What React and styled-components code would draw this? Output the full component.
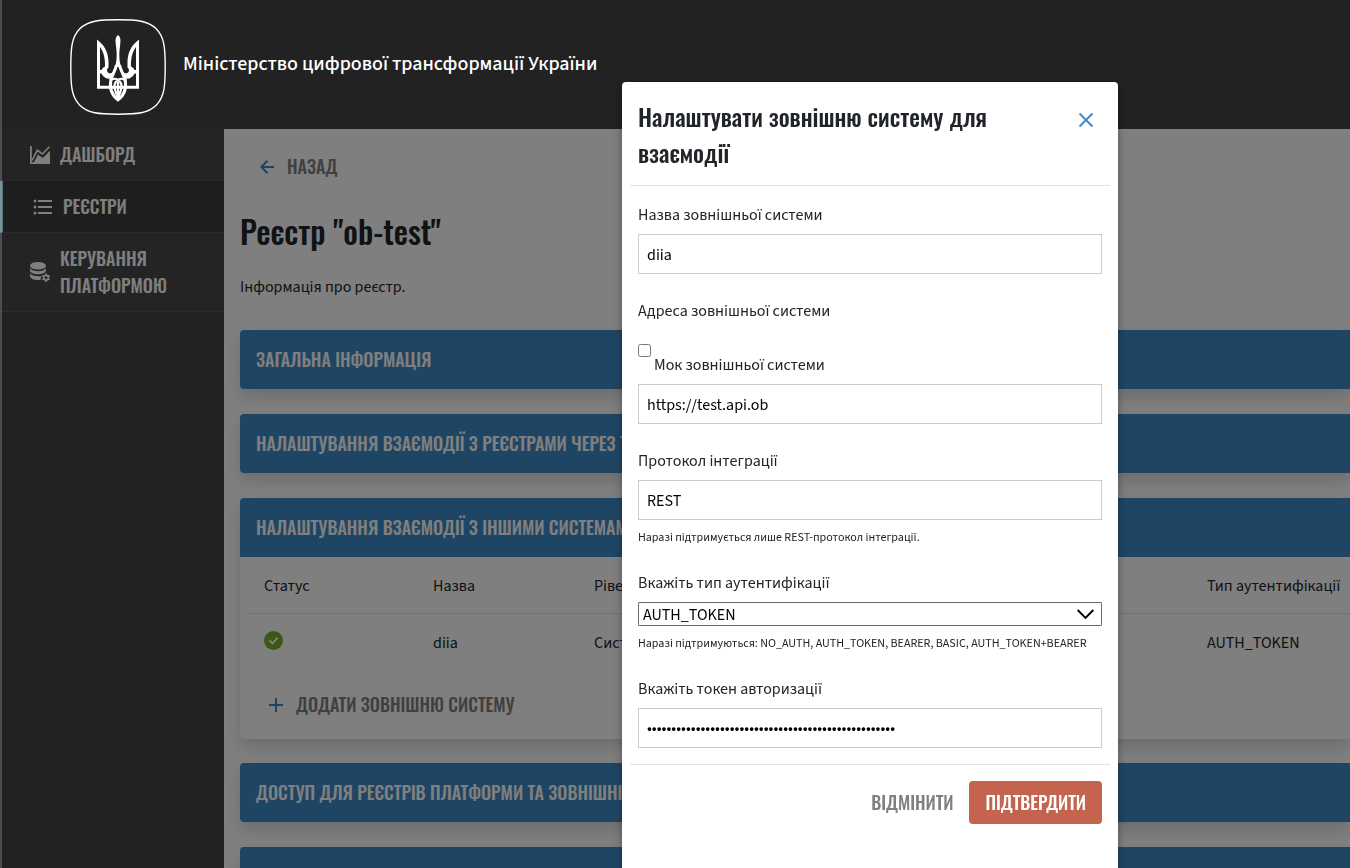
import React, {useState} from "react";
import styled, {createGlobalStyle} from "styled-components";

const heading = `"Oswald", "Open Sans Condensed", "Roboto Condensed", sans-serif`;
const text = `"Source Sans 3", "Noto Sans", sans-serif`;

const GlobalStyle = createGlobalStyle`
  * {
    box-sizing: border-box;
  }

  body {
    margin: 0;
    overflow: hidden;
    background: #444;
    color: #212529;
    font-family: ${text};
    font-size: 16px;
    line-height: 24px;
  }
`;

const Page = styled.div`
  display: flex;
  flex-direction: column;
  height: 100vh;

  &::after {
    content: "";
    position: fixed;
    top: 0;
    bottom: 0;
    left: 0;
    width: 2px;
    z-index: 3;
    background: rgba(255, 255, 255, 0.19);
  }
`;

const Header = styled.header`
  display: flex;
  align-items: center;
  gap: 17px;
  position: relative;
  z-index: 2;
  flex: none;
  padding: 19px 70px 14px;
  background: #222;
  color: #fff;
`;

const Ministry = styled.div`
  padding-bottom: 6px;
  font-size: 20px;
  font-weight: 500;
`;

const Content = styled.div`
  display: flex;
  flex: 1;
  min-height: 0;
`;

const Sidebar = styled.nav`
  flex: none;
  width: 224px;
`;

const NavItem = styled.a`
  display: flex;
  align-items: center;
  gap: 10px;
  padding: 12px 30px;
  border-left: ${({$active}) => ($active ? "3px solid #b0f0ff" : "none")};
  border-bottom: 1px solid #565656;
  background: ${({$active}) => ($active ? "#3c3c3c" : "#484848")};
  color: #fff;
  font-family: ${heading};
  font-size: 18px;
  font-weight: 500;
  line-height: 27px;
  text-decoration: none;
  text-transform: uppercase;

  svg {
    flex: none;
  }
`;

const Main = styled.main`
  flex: 1;
  min-width: 0;
  padding: 16px 0 0 16px;
  overflow: hidden;
  background: #fff;
`;

const BackLink = styled.a`
  display: inline-flex;
  align-items: center;
  gap: 13px;
  margin-bottom: 19px;
  padding: 8px 20px;
  color: #808080;
  font-family: ${heading};
  font-size: 18px;
  font-weight: 500;
  line-height: 27px;
  text-decoration: none;
  text-transform: uppercase;
`;

const Title = styled.h1`
  margin: 0 0 20px;
  font-family: ${heading};
  font-size: 32px;
  font-weight: 500;
  line-height: 48px;
`;

const Info = styled.p`
  margin: 0 0 31px;
`;

const Card = styled.section`
  margin-bottom: ${({$open}) => ($open ? 24 : 25)}px;
  border-radius: 4px 0 0 4px;
  box-shadow: 0 8px 16px rgba(0, 0, 0, 0.15);
`;

const CardTitle = styled.h2`
  margin: 0;
  padding: 16px;
  border-radius: ${({$open}) => ($open ? "4px 0 0 0" : "4px 0 0 4px")};
  background: #3e8ac8;
  color: #fff;
  font-family: ${heading};
  font-size: 18px;
  font-weight: 500;
  line-height: 27px;
  text-transform: uppercase;
  white-space: nowrap;
`;

const CardBody = styled.div`
  padding: 0 0 13px 8px;
`;

const Table = styled.table`
  width: 100%;
  border-collapse: collapse;
  table-layout: fixed;

  th,
  td {
    padding: 2px 16px 0;
    font-weight: 400;
    text-align: left;
    white-space: nowrap;
  }

  th {
    height: 56px;
    border-bottom: 1px solid #e0e0e6;
  }

  td {
    height: 57px;
  }

  svg {
    display: block;
    margin-bottom: 4px;
  }
`;

const Column = styled.col`
  width: ${({$width}) => $width}px;
`;

const AddButton = styled.button`
  display: flex;
  align-items: center;
  gap: 13px;
  margin: 13px 0 0 5px;
  padding: 8px 16px;
  border: none;
  background: none;
  color: #808080;
  font-family: ${heading};
  font-size: 18px;
  font-weight: 500;
  line-height: 27px;
  text-transform: uppercase;
`;

const Backdrop = styled.div`
  position: fixed;
  inset: 0;
  z-index: 1;
  background: rgba(0, 0, 0, 0.5);
`;

const ModalLayer = styled.div`
  display: flex;
  justify-content: flex-end;
  position: fixed;
  inset: 0;
  z-index: 4;
  padding: 82px 232px 0 0;
`;

const Modal = styled.form`
  width: 496px;
  height: 850px;
  padding: 0 8px;
  border-radius: 4px;
  background: #fff;
  box-shadow: 0 2px 8px rgba(0, 0, 0, 0.33);
`;

const ModalHeader = styled.div`
  display: flex;
  justify-content: space-between;
  align-items: flex-start;
  padding: 16px 8px 15px;
  border-bottom: 1px solid #e1e1ea;
`;

const ModalTitle = styled.h2`
  max-width: 380px;
  margin: 0;
  font-family: ${heading};
  font-size: 24px;
  font-weight: 500;
  line-height: 36px;
`;

const CloseButton = styled.button`
  display: flex;
  margin: 6px 0;
  padding: 8px;
  border: none;
  background: none;
`;

const ModalBody = styled.div`
  display: flex;
  flex-direction: column;
  gap: 24px;
  padding: 16px 8px;
`;

const Field = styled.div`
  display: flex;
  flex-direction: column;
  gap: 6px;
`;

const Label = styled.label`
  line-height: 26px;
`;

const Input = styled.input`
  width: 100%;
  height: 40px;
  padding: 2px 8px 0;
  border: 1px solid #cbcbd6;
  border-radius: 0;
  background: #fff;
  color: #000;
  font-family: ${text};
  font-size: 16px;

  &[type="password"] {
    padding-top: 0;
  }
`;

const Hint = styled.span`
  padding-top: 3px;
  font-size: 12px;
  line-height: 17px;
`;

const CheckRow = styled.div`
  display: flex;
  align-items: flex-start;
  gap: 3px;
  padding-top: 14px;

  input {
    width: 13px;
    height: 13px;
    margin: 0;
  }

  label {
    padding-top: 8px;
  }
`;

const SelectBox = styled.div`
  position: relative;

  svg {
    position: absolute;
    top: 7px;
    right: 8px;
    pointer-events: none;
  }
`;

const Select = styled.select`
  display: block;
  width: 100%;
  height: 24px;
  padding: 1px 4px 0;
  appearance: none;
  border: 1px solid #6b6b6b;
  border-radius: 1px;
  background: #fff;
  color: #000;
  font-family: ${text};
  font-size: 16px;
`;

const ModalFooter = styled.div`
  display: flex;
  justify-content: flex-end;
  padding: 16px 8px;
  border-top: 1px solid #e1e1ea;
`;

const Button = styled.button`
  padding: 8px 16px;
  border: none;
  border-radius: 4px;
  background: ${({$primary}) => ($primary ? "#c5644e" : "none")};
  color: ${({$primary}) => ($primary ? "#fff" : "#808080")};
  font-family: ${heading};
  font-size: 18px;
  font-weight: 500;
  line-height: 27px;
  text-transform: uppercase;
`;

const Logo = () => (
    <svg width="96" height="96" viewBox="0 0 96 96" fill="none" stroke="#fff" aria-hidden="true">
        <path
            strokeWidth="1.4"
            d="M48 .8C67 .8 78 1.6 86.200 9.800S95.200 29 95.200 48 94.400 78 86.200 86.200 67 95.200 48 95.200 18 94.400 9.800 86.200.8 67 .8 48 1.600 18 9.800 9.800 29 .8 48 .8Z"
        />
        {/* trident: middle blade, side blades, base, shield */}
        <path fill="#fff" stroke="none" d="M48 16C45.600 18 45.200 20.500 45.700 24L46.600 33C46.900 39 46.400 44 44.800 48H51.200C49.600 44 49.100 39 49.400 33L50.300 24C50.800 20.500 50.400 18 48 16Z"/>
        <path fill="#fff" stroke="none" d="M27 20.500C34.500 26 38 33 38.500 42V48.500C37 49.500 36.600 51.500 37.500 53 38.800 55 42 54.800 43.500 52L43 57.500C41.500 60 37.500 60.500 35 58.500 33 57 32 56 31.500 54.500H30V67H27ZM30 28V51H31.500C32 49.500 33.300 48.300 35 47.500 35.200 40 34 33.500 30 28Z"/>
        <path fill="#fff" stroke="none" d="M69 20.500C61.500 26 58 33 57.500 42V48.500C59 49.500 59.400 51.500 58.500 53 57.200 55 54 54.800 52.500 52L53 57.500C54.500 60 58.500 60.500 61 58.500 63 57 64 56 64.500 54.500H66V67H69ZM66 28V51H64.500C64 49.500 62.700 48.300 61 47.500 60.800 40 62 33.500 66 28Z"/>
        <path strokeWidth="3" d="M28.500 54V68.200H67.500V54"/>
        <path strokeWidth="3" d="M46.500 46C45.500 51 42 56 40.800 61.500M49.500 46C50.500 51 54 56 55.200 61.500"/>
        <path strokeWidth="3" d="M41 60C39.400 68 41.500 76 48 80.800 54.500 76 56.600 68 55 60"/>
        <path strokeWidth="2.200" d="M42 60.500C45.500 58.500 50.500 61 51.500 66 52 70 50 74 48 79M54 60.500C50.500 58.500 45.500 61 44.500 66 44 70 46 74 48 79M48 63V80"/>
    </svg>
);

const ChartIcon = () => (
    <svg width="20" height="18" viewBox="0 0 20 18" aria-hidden="true">
        <path fill="none" stroke="#fff" strokeWidth="1.800" d="M.9 0V17.100H19"/>
        <path fill="none" stroke="#fff" strokeWidth="1.600" d="M2 14.500 7.300 4.300 12.500 8 19.300.8"/>
        <path fill="#fff" d="M3.500 17 8 8.500 12.800 12 20 4.800V18H3.500Z"/>
    </svg>
);

const ListIcon = () => (
    <svg width="20" height="18" viewBox="0 0 20 18" fill="#fff" aria-hidden="true">
        <circle cx="2" cy="3" r="1.500"/>
        <circle cx="2" cy="9" r="1.500"/>
        <circle cx="2" cy="15" r="1.500"/>
        <path d="M5 2H19V4H5ZM5 8H19V10H5ZM5 14H19V16H5Z"/>
    </svg>
);

const DatabaseIcon = () => (
    <svg width="20" height="20" viewBox="0 0 20 20" aria-hidden="true">
        <ellipse cx="8" cy="3.800" rx="8" ry="3.800" fill="#fff"/>
        <path fill="#fff" d="M0 6C1.500 8.300 4.500 9.300 8 9.300S14.500 8.300 16 6V8.500C15.500 11 12 12.300 8 12.300S.5 11 0 8.500Z"/>
        <path fill="#fff" d="M0 11.300C1.500 13.500 4.500 14.300 8 14.300 9.300 14.300 10.500 14.200 11.500 14L10.500 17.800C9.700 18 8.800 18 8 18 3.500 18 .3 16.500 0 14Z"/>
        <circle cx="16" cy="15.700" r="2.300" fill="none" stroke="#fff" strokeWidth="1.700"/>
        <path stroke="#fff" strokeWidth="1.700" d="M16 11.500V13.500M16 18V20M12.300 13.600 14 14.600M18 16.800 19.700 17.800M12.300 17.800 14 16.800M18 14.600 19.700 13.600"/>
    </svg>
);

const ArrowIcon = () => (
    <svg width="14" height="14" viewBox="0 0 14 14" fill="none" stroke="#3e8ac8" strokeWidth="2" aria-hidden="true">
        <path d="M7.500.7 1.300 7 7.500 13.300M1.300 7H14"/>
    </svg>
);

const PlusIcon = () => (
    <svg width="14" height="14" viewBox="0 0 14 14" stroke="#3e8ac8" strokeWidth="2" aria-hidden="true">
        <path d="M7 0V14M0 7H14"/>
    </svg>
);

const CloseIcon = () => (
    <svg width="16" height="16" viewBox="0 0 16 16" stroke="#3e8ac8" strokeWidth="1.900" aria-hidden="true">
        <path d="M1.500 1.500 14.500 14.500M14.500 1.500 1.500 14.500"/>
    </svg>
);

const StatusIcon = () => (
    <svg width="19" height="19" viewBox="0 0 19 19" role="img" aria-label="Активна">
        <circle cx="9.500" cy="9.500" r="9.500" fill="#7fae2b"/>
        <path fill="none" stroke="#fff" strokeWidth="1.900" d="M5.400 9.300 8.400 12.300 13.600 6.700"/>
    </svg>
);

const ChevronIcon = () => (
    <svg width="17" height="11" viewBox="0 0 17 11" fill="none" stroke="#000" strokeWidth="1.900" aria-hidden="true">
        <path d="M.7 1 8.500 8.800 16.300 1"/>
    </svg>
);

const navItems = [
    {title: "Дашборд", icon: <ChartIcon/>},
    {title: "Реєстри", icon: <ListIcon/>, active: true},
    {title: "Керування платформою", icon: <DatabaseIcon/>},
];

const authTypes = ["NO_AUTH", "AUTH_TOKEN", "BEARER", "BASIC", "AUTH_TOKEN+BEARER"];

const App = () => {
    const [system, setSystem] = useState({
        name: "diia",
        mock: false,
        url: "https://test.api.ob",
        protocol: "REST",
        auth: "AUTH_TOKEN",
        token: "0".repeat(51),
    });

    const handleChange = (e) => {
        const {name, type, checked, value} = e.target;
        setSystem({...system, [name]: type === "checkbox" ? checked : value});
    };

    return (
        <>
            <GlobalStyle/>
            <Page>
                <Header>
                    <Logo/>
                    <Ministry>Міністерство цифрової трансформації України</Ministry>
                </Header>
                <Content>
                    <Sidebar>
                        {navItems.map(({title, icon, active}) => (
                            <NavItem key={title} href="#" $active={active}>
                                {icon}
                                {title}
                            </NavItem>
                        ))}
                    </Sidebar>
                    <Main>
                        <BackLink href="#"><ArrowIcon/>Назад</BackLink>
                        <Title>Реєстр "ob-test"</Title>
                        <Info>Інформація про реєстр.</Info>
                        <Card>
                            <CardTitle>Загальна інформація</CardTitle>
                        </Card>
                        <Card>
                            <CardTitle>Налаштування взаємодії з реєстрами через Трембіту</CardTitle>
                        </Card>
                        <Card $open>
                            <CardTitle $open>Налаштування взаємодії з іншими системами</CardTitle>
                            <CardBody>
                                <Table>
                                    <colgroup>
                                        <Column $width={169}/>
                                        <Column $width={161}/>
                                        <col/>
                                        <col/>
                                        <Column $width={159}/>
                                    </colgroup>
                                    <thead>
                                        <tr>
                                            <th>Статус</th>
                                            <th>Назва</th>
                                            <th>Рівень довіри</th>
                                            <th>Протокол</th>
                                            <th>Тип аутентифікації</th>
                                        </tr>
                                    </thead>
                                    <tbody>
                                        <tr>
                                            <td><StatusIcon/></td>
                                            <td>diia</td>
                                            <td>Система</td>
                                            <td>REST</td>
                                            <td>AUTH_TOKEN</td>
                                        </tr>
                                    </tbody>
                                </Table>
                                <AddButton type="button"><PlusIcon/>Додати зовнішню систему</AddButton>
                            </CardBody>
                        </Card>
                        <Card>
                            <CardTitle>Доступ для реєстрів платформи та зовнішніх систем</CardTitle>
                        </Card>
                        <Card>
                            <CardTitle>Конфігурація</CardTitle>
                        </Card>
                    </Main>
                </Content>
            </Page>
            <Backdrop/>
            <ModalLayer>
                <Modal role="dialog" aria-labelledby="modal-title" onSubmit={(e) => e.preventDefault()}>
                    <ModalHeader>
                        <ModalTitle id="modal-title">Налаштувати зовнішню систему для взаємодії</ModalTitle>
                        <CloseButton type="button" aria-label="Закрити"><CloseIcon/></CloseButton>
                    </ModalHeader>
                    <ModalBody>
                        <Field>
                            <Label htmlFor="name">Назва зовнішньої системи</Label>
                            <Input id="name" name="name" value={system.name} onChange={handleChange}/>
                        </Field>
                        <Field>
                            <Label htmlFor="url">Адреса зовнішньої системи</Label>
                            <CheckRow>
                                <input id="mock" name="mock" type="checkbox" checked={system.mock} onChange={handleChange}/>
                                <Label htmlFor="mock">Мок зовнішньої системи</Label>
                            </CheckRow>
                            <Input id="url" name="url" value={system.url} onChange={handleChange}/>
                        </Field>
                        <Field>
                            <Label htmlFor="protocol">Протокол інтеграції</Label>
                            <Input id="protocol" name="protocol" value={system.protocol} onChange={handleChange}/>
                            <Hint>Наразі підтримується лише REST-протокол інтеграції.</Hint>
                        </Field>
                        <Field>
                            <Label htmlFor="auth">Вкажіть тип аутентифікації</Label>
                            <SelectBox>
                                <Select id="auth" name="auth" value={system.auth} onChange={handleChange}>
                                    {authTypes.map((type) => <option key={type}>{type}</option>)}
                                </Select>
                                <ChevronIcon/>
                            </SelectBox>
                            <Hint>Наразі підтримуються: {authTypes.join(", ")}</Hint>
                        </Field>
                        <Field>
                            <Label htmlFor="token">Вкажіть токен авторизації</Label>
                            <Input id="token" name="token" type="password" value={system.token} onChange={handleChange}/>
                        </Field>
                    </ModalBody>
                    <ModalFooter>
                        <Button type="button">Відмінити</Button>
                        <Button type="submit" $primary>Підтвердити</Button>
                    </ModalFooter>
                </Modal>
            </ModalLayer>
        </>
    );
};

export default App;
